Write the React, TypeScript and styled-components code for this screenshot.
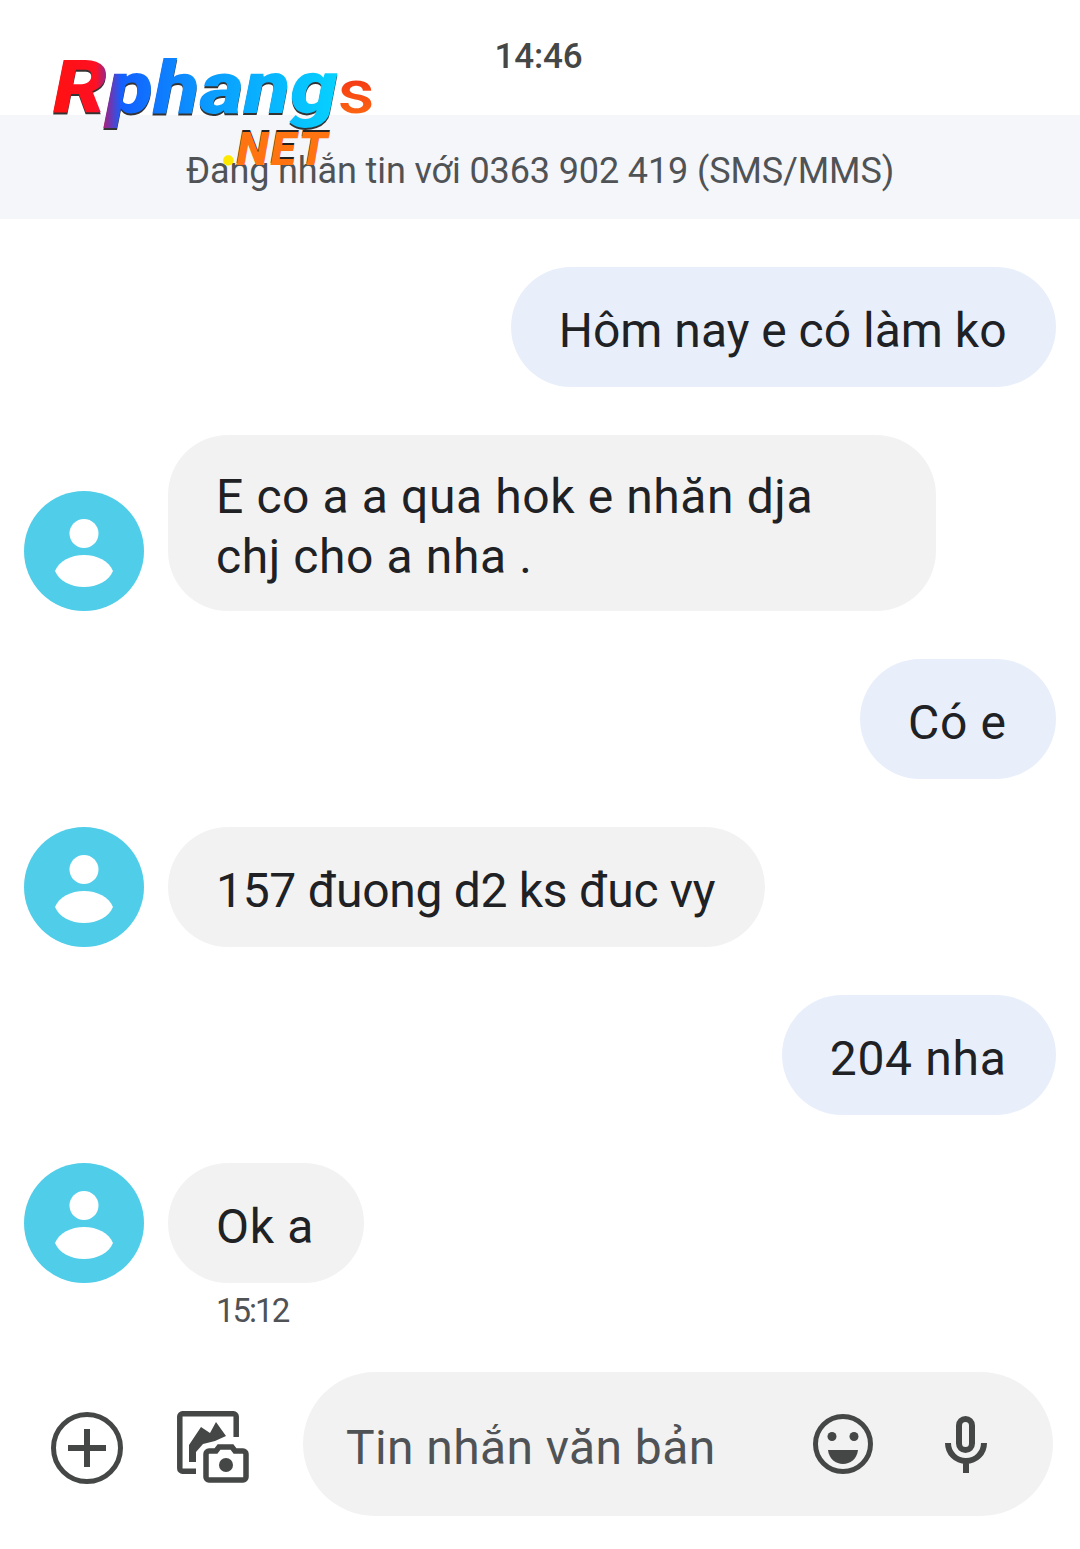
import styled, { createGlobalStyle } from "styled-components";

const GlobalStyle = createGlobalStyle`
  html, body {
    margin: 0;
    padding: 0;
    background: #fff;
  }
  body {
    font-family: Roboto, "Noto Sans", sans-serif;
    color: #1f1f1f;
  }
`;

const Page = styled.div`
  position: relative;
  width: 1080px;
  height: 1549px;
  overflow: hidden;
  background: #fff;
`;

const StatusBar = styled.div`
  height: 115px;
  padding: 36px 3px 0 0;
  box-sizing: border-box;
  text-align: center;
  font-size: 35px;
  line-height: 42px;
  font-weight: 500;
  letter-spacing: -0.2px;
  color: #444746;
`;

const Banner = styled.div`
  height: 104px;
  box-sizing: border-box;
  padding-top: 8px;
  background: #f5f6fa;
  display: flex;
  align-items: center;
  justify-content: center;
  font-size: 36px;
  letter-spacing: -0.12px;
  color: #505356;
`;

const Logo = styled.div`
  position: absolute;
  left: 53px;
  top: 46px;
  width: 340px;
  height: 130px;
  font-style: italic;
  font-weight: 900;
`;

const LogoMain = styled.div`
  display: flex;
  font-size: 74px;
  line-height: 84px;
  transform-origin: left center;
  transform: scaleX(1.15);
`;

const LogoPhang = styled.span`
  background: linear-gradient(90deg, #ff1111 0%, #ff1022 15%, #8a2a9a 19%, #1260ff 24%, #0a9cff 55%, #06d2ff 100%);
  -webkit-background-clip: text;
  background-clip: text;
  color: transparent;
  filter: drop-shadow(0 2px 0 #333);
`;

const LogoEnd = styled.span`
  font-size: 62px;
  font-style: normal;
  font-weight: 500;
  align-self: flex-end;
  line-height: 76px;
  background: linear-gradient(180deg, #f01818, #ff7a10);
  -webkit-background-clip: text;
  background-clip: text;
  color: transparent;
`;

const LogoNet = styled.div`
  position: absolute;
  left: 169px;
  top: 78px;
  font-size: 47px;
  line-height: 50px;
  letter-spacing: 2px;
  color: #ff7410;
  text-shadow: 0 -2px 0 #222;
`;

const LogoDot = styled.span`
  font-size: 60px;
  line-height: 40px;
  margin-right: -5px;
  color: #ffe800;
  text-shadow: none;
`;

const Thread = styled.div`
  display: flex;
  flex-direction: column;
  gap: 48px;
  padding: 48px 24px 0;
`;

const Row = styled.div<{ $out?: boolean }>`
  display: flex;
  align-items: flex-end;
  gap: 24px;
  justify-content: ${(p) => (p.$out ? "flex-end" : "flex-start")};
`;

const Bubble = styled.div<{ $out?: boolean; $width?: number; $track?: number }>`
  box-sizing: border-box;
  min-height: 120px;
  padding: ${(p) => (p.$width ? "32px" : "34px")} 49.5px 24px 48px;
  border-radius: 60px;
  font-size: 48px;
  line-height: 60px;
  white-space: pre-line;
  color: #202124;
  letter-spacing: ${(p) => p.$track ?? 0}px;
  background: ${(p) => (p.$out ? "#e8effb" : "#f2f2f2")};
  ${(p) => (p.$width ? `width: ${p.$width}px;` : "")}
`;

const Avatar = styled.svg`
  width: 120px;
  height: 120px;
  flex: none;
  display: block;
`;

const Stamp = styled.div`
  margin: 9px 0 0 192px;
  font-size: 33px;
  line-height: 38px;
  color: #505356;
  letter-spacing: -2px;
`;

const Composer = styled.div`
  position: absolute;
  left: 0;
  right: 0;
  top: 1372px;
  display: flex;
  align-items: center;
  height: 144px;
  padding: 0 27px 0 51px;
`;

const IconSlot = styled.div<{ $gap: number; $drop?: number }>`
  display: flex;
  margin-right: ${(p) => p.$gap}px;
  margin-top: ${(p) => p.$drop ?? 0}px;
  flex: none;
`;

const InputPill = styled.div`
  flex: 1;
  height: 144px;
  border-radius: 72px;
  background: #f2f2f2;
  display: flex;
  align-items: center;
  padding: 0 66px 0 43px;
`;

const Placeholder = styled.div`
  flex: 1;
  padding-top: 6px;
  font-size: 48px;
  letter-spacing: 0.4px;
  color: #505356;
`;

const PersonAvatar = () => (
  <Avatar viewBox="0 0 120 120">
    <circle cx="60" cy="60" r="60" fill="#4fcde9" />
    <circle cx="60" cy="42.5" r="14.5" fill="#fff" />
    <path fill="#fff" d="M31 80C35 70 47 64 60 64C73 64 85 70 89 80C85 90 73 96 60 96C47 96 35 90 31 80z" />
  </Avatar>
);

const Received = ({ text, width, track }: { text: string; width?: number; track?: number }) => (
  <Row>
    <PersonAvatar />
    <Bubble $width={width} $track={track}>
      {text}
    </Bubble>
  </Row>
);

const Sent = ({ text, track }: { text: string; track?: number }) => (
  <Row $out>
    <Bubble $out $track={track}>
      {text}
    </Bubble>
  </Row>
);

const App = () => (
  <Page>
    <GlobalStyle />
    <StatusBar>14:46</StatusBar>
    <Banner>Đang nhắn tin với 0363 902 419 (SMS/MMS)</Banner>
    <Logo>
      <LogoMain>
        <LogoPhang>Rphang</LogoPhang>
        <LogoEnd>s</LogoEnd>
      </LogoMain>
      <LogoNet>
        <LogoDot>.</LogoDot>NET
      </LogoNet>
    </Logo>
    <Thread>
      <Sent text="Hôm nay e có làm ko" />
      <Received text={"E co a a qua hok e nhăn dja\nchj cho a nha ."} width={768} track={0.6} />
      <Sent text="Có e" track={0.6} />
      <Received text="157 đuong d2 ks đuc vy" track={-0.3} />
      <Sent text="204 nha" track={0.7} />
      <div>
        <Received text="Ok a" track={0.7} />
        <Stamp>15:12</Stamp>
      </div>
    </Thread>
    <Composer>
      <IconSlot $gap={54} $drop={7}>
        <svg width="72" height="72" viewBox="0 0 72 72" fill="none" stroke="#444746" strokeWidth="5">
          <circle cx="36" cy="36" r="33.5" />
          <path strokeWidth="6" d="M36 17v38M17 36h38" />
        </svg>
      </IconSlot>
      <IconSlot $gap={54} $drop={6}>
        <svg width="72" height="72" viewBox="0 0 72 72" fill="none">
          <path
            stroke="#444746"
            strokeWidth="5.5"
            d="M19 60.2H5.5a2.7 2.7 0 0 1-2.7-2.7V5.5a2.7 2.7 0 0 1 2.7-2.7h51a2.7 2.7 0 0 1 2.7 2.7V26"
          />
          <path fill="#444746" d="M12 51V34l12-18 9 6 6-11 10 14-11 5-12 3-7 8v10z" />
          <path
            fill="#fff"
            stroke="#444746"
            strokeWidth="5.5"
            d="M32 40h7l3-4h13l3 4h8a3 3 0 0 1 3 3v23a3 3 0 0 1-3 3H32a3 3 0 0 1-3-3V43a3 3 0 0 1 3-3z"
          />
          <circle cx="49" cy="54" r="7" fill="#444746" />
        </svg>
      </IconSlot>
      <InputPill>
        <Placeholder>Tin nhắn văn bản</Placeholder>
        <IconSlot $gap={72}>
          <svg width="60" height="60" viewBox="0 0 60 60" fill="none">
            <circle cx="30" cy="30" r="27.5" stroke="#444746" strokeWidth="5" />
            <circle cx="19" cy="22.5" r="4.5" fill="#444746" />
            <circle cx="41" cy="22.5" r="4.5" fill="#444746" />
            <path fill="#444746" d="M15 36h30c-1 9-8 14-15 14s-14-5-15-14z" />
          </svg>
        </IconSlot>
        <svg width="42" height="57" viewBox="0 0 42 57" fill="none" stroke="#444746">
          <rect x="14" y="3" width="13" height="31" rx="6.5" strokeWidth="6" />
          <path strokeWidth="6" d="M3 27c0 10 8 18 18 18s18-8 18-18M21 45v12" />
        </svg>
      </InputPill>
    </Composer>
  </Page>
);

export default App;
